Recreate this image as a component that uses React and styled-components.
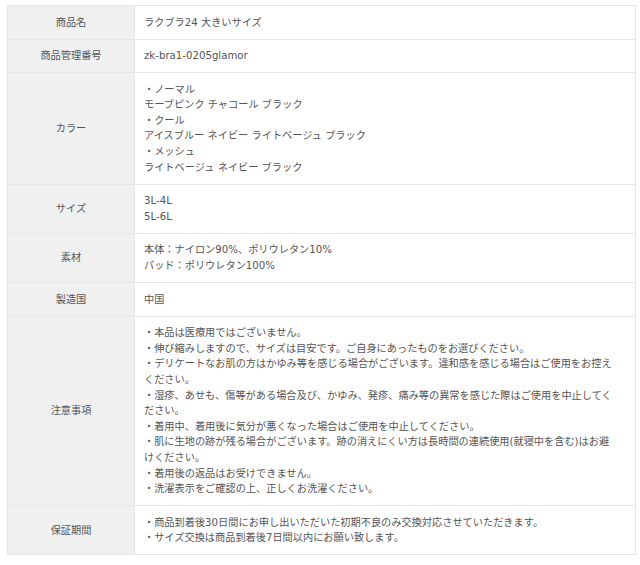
import React from "react";
import styled, { createGlobalStyle } from "styled-components";

const Global = createGlobalStyle`
  html, body { margin: 0; padding: 0; background: #fff; }
  body {
    font-family: "DejaVu Sans", "Noto Sans CJK JP", sans-serif;
    color: #555;
  }
`;

const Page = styled.div`
  padding: 5px 4px 0 7px;
`;

const Table = styled.table`
  width: 629px;
  border-collapse: collapse;
  table-layout: fixed;
  border: 1px solid #e6e6e6;
  font-size: 10.2px;
  line-height: 15.6px;
`;

const Label = styled.th`
  width: 127px;
  box-sizing: border-box;
  background: #f0f0f0;
  font-weight: normal;
  text-align: center;
  vertical-align: middle;
  color: #555;
  padding: 8px 6px;
  border: 1px solid #e6e6e6;
`;

const Value = styled.td`
  padding: 8.5px 19px 8.5px 9px;
  border: 1px solid #e6e6e6;
  text-align: left;
  vertical-align: middle;
  color: #555;
  word-break: break-all;
`;

const Line = styled.div``;

const rows = [
  { label: "商品名", lines: ["ラクブラ24 大きいサイズ"] },
  { label: "商品管理番号", lines: ["zk-bra1-0205glamor"] },
  {
    label: "カラー",
    lines: [
      "・ノーマル",
      "モーブピンク チャコール ブラック",
      "・クール",
      "アイスブルー ネイビー ライトベージュ ブラック",
      "・メッシュ",
      "ライトベージュ ネイビー ブラック",
    ],
  },
  { label: "サイズ", lines: ["3L-4L", "5L-6L"] },
  {
    label: "素材",
    lines: ["本体：ナイロン90%、ポリウレタン10%", "パッド：ポリウレタン100%"],
  },
  { label: "製造国", lines: ["中国"] },
  {
    label: "注意事項",
    lines: [
      "・本品は医療用ではございません。",
      "・伸び縮みしますので、サイズは目安です。ご自身にあったものをお選びください。",
      "・デリケートなお肌の方はかゆみ等を感じる場合がございます。違和感を感じる場合はご使用をお控えください。",
      "・湿疹、あせも、傷等がある場合及び、かゆみ、発疹、痛み等の異常を感じた際はご使用を中止してください。",
      "・着用中、着用後に気分が悪くなった場合はご使用を中止してください。",
      "・肌に生地の跡が残る場合がございます。跡の消えにくい方は長時間の連続使用(就寝中を含む)はお避けください。",
      "・着用後の返品はお受けできません。",
      "・洗濯表示をご確認の上、正しくお洗濯ください。",
    ],
  },
  {
    label: "保証期間",
    lines: [
      "・商品到着後30日間にお申し出いただいた初期不良のみ交換対応させていただきます。",
      "・サイズ交換は商品到着後7日間以内にお願い致します。",
    ],
  },
];

export default function App() {
  return (
    <Page>
      <Global />
      <Table>
        <tbody>
          {rows.map((r) => (
            <tr key={r.label}>
              <Label>{r.label}</Label>
              <Value>
                {r.lines.map((l, i) => (
                  <Line key={i}>{l}</Line>
                ))}
              </Value>
            </tr>
          ))}
        </tbody>
      </Table>
    </Page>
  );
}
